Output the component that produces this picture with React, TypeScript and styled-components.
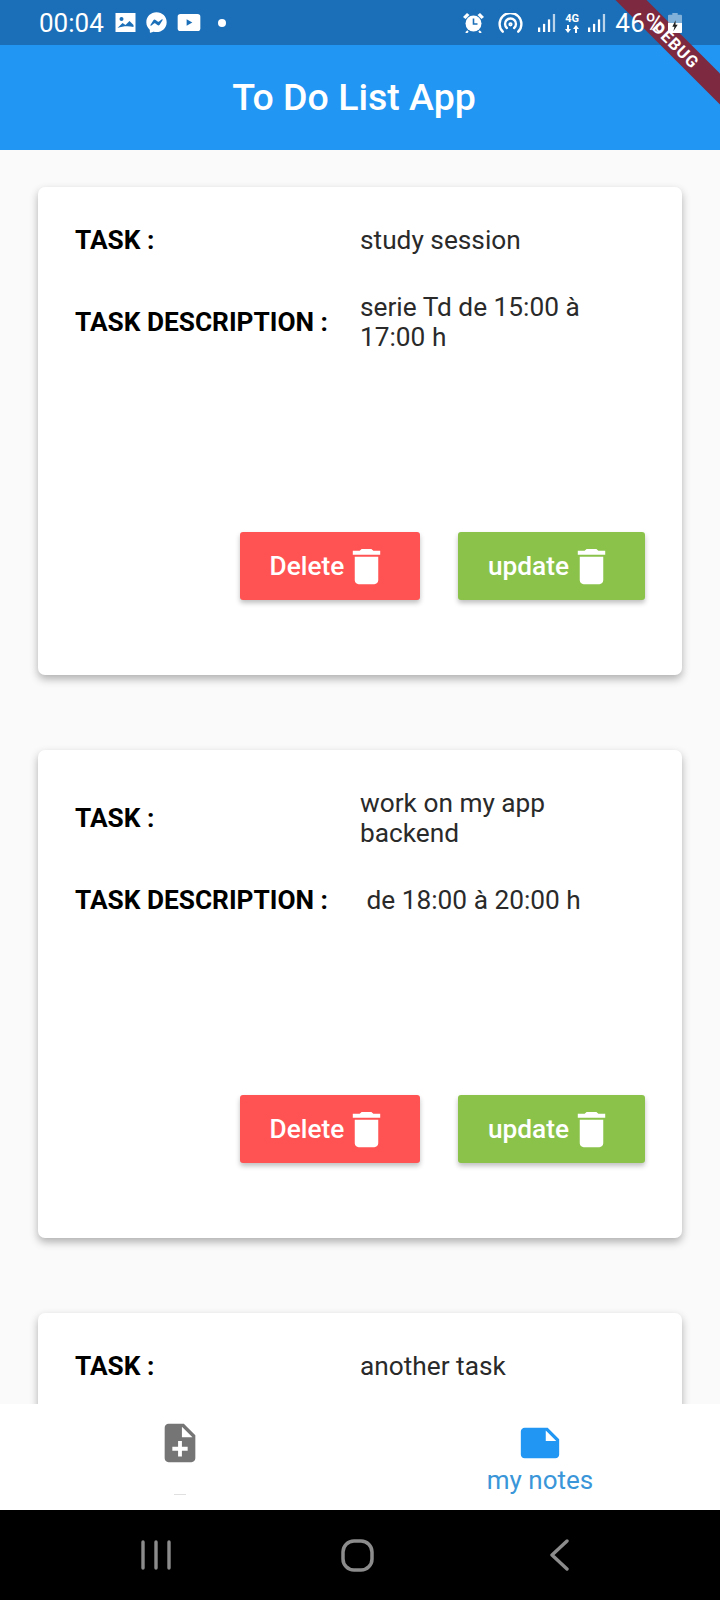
import React from 'react';
import styled, { createGlobalStyle } from 'styled-components';
import { MdDelete, MdNote, MdNoteAdd } from 'react-icons/md';
import { FaFacebookMessenger } from 'react-icons/fa';

const GlobalStyle = createGlobalStyle`
  html, body {
    margin: 0;
    padding: 0;
    background: #000;
  }
  * {
    box-sizing: border-box;
  }
`;

interface Task {
  title: string;
  description?: string;
}

// the third card runs under the bottom nav, only its title shows
const tasks: Task[] = [
  { title: 'study session', description: 'serie Td de 15:00 à 17:00 h' },
  { title: 'work on my app backend', description: ' de 18:00 à 20:00 h' },
  { title: 'another task' },
];

const App: React.FC = () => {
  return (
    <Screen>
      <GlobalStyle />
      <StatusBar>
        <StatusLeft>
          <Clock>00:04</Clock>
          <svg width="21" height="19" viewBox="0 0 20 19">
            <path fill="#fff" d="M0 0h20v19H0z" />
            <circle cx="6" cy="6" r="2" fill="#1b6fb8" />
            <path fill="#1b6fb8" d="M2 15l5-5 3 2 4-4 4 4v2c-5-1.500-11-1-16 1z" />
          </svg>
          <FaFacebookMessenger size={21} color="#fff" />
          <svg width="24" height="17" viewBox="0 0 24 18">
            <rect width="24" height="18" rx="3" fill="#fff" />
            <path fill="#1b6fb8" d="M9.500 5.500l6 3.500-6 3.500z" />
          </svg>
          <Dot />
        </StatusLeft>
        <StatusRight>
          <StatusIcon $after={14} width="21" height="21" viewBox="0 0 21 21">
            <path fill="#fff" d="M0 5l4-4 2.500 2-4 4zM21 5l-4-4-2.500 2 4 4z" />
            <circle cx="10.500" cy="11.500" r="8" fill="#fff" />
            <path stroke="#fff" strokeWidth="2" d="M5 19l-2 2M16 19l2 2" />
            <path fill="none" stroke="#1b6fb8" strokeWidth="1.600" d="M10.500 6.500v5.500h4" />
          </StatusIcon>
          <StatusIcon $after={15} width="25" height="20" viewBox="0 0 27 22" fill="none" stroke="#fff" strokeWidth="2.600" strokeLinecap="round">
            <path d="M5 20.500a12 12 0 1 1 17 0" />
            <path d="M9.500 16.500a6 6 0 1 1 8 0" />
            <circle cx="13.500" cy="12.500" r="1" />
          </StatusIcon>
          <SignalBars />
          <NetworkType>
            <span>4G</span>
            <svg width="14" height="8" viewBox="0 0 14 8" fill="#fff">
              <path d="M3 8l-3-4h2V0h2v4h2zM11 0l3 4h-2v4h-2V4H8z" />
            </svg>
          </NetworkType>
          <SignalBars />
          <Percent>46%</Percent>
          <svg width="14" height="20" viewBox="0 0 13 22" preserveAspectRatio="none">
            <path fill="#fff" fillOpacity="0.45" d="M4 0h5v2h3a1 1 0 0 1 1 1v18a1 1 0 0 1-1 1H1a1 1 0 0 1-1-1V3a1 1 0 0 1 1-1h3z" />
            <path fill="#fff" d="M0 11h13v10a1 1 0 0 1-1 1H1a1 1 0 0 1-1-1z" />
            <path fill="#222" d="M7 8l-3 7h2l-1 5 4-7H7z" />
          </svg>
        </StatusRight>
      </StatusBar>
      <AppBar>To Do List App</AppBar>
      <TaskList>
        {tasks.map((task) => (
          <TaskCard key={task.title}>
            <Row>
              <Label>TASK :</Label>
              <Value>{task.title}</Value>
            </Row>
            {task.description && (
              <>
                <Row>
                  <Label>TASK DESCRIPTION :</Label>
                  <Value>{task.description}</Value>
                </Row>
                <Actions>
                  <ActionButton $color="#ff5252" $width={180}>
                    Delete <TrashIcon size={47} />
                  </ActionButton>
                  <ActionButton $color="#8bc34a" $width={187}>
                    update <TrashIcon size={47} />
                  </ActionButton>
                </Actions>
              </>
            )}
          </TaskCard>
        ))}
      </TaskList>
      <BottomNav>
        <NavItem>
          <MdNoteAdd size={46} color="#757575" />
          <HiddenMark />
        </NavItem>
        <NavItem>
          <MdNote size={46} color="#2196f3" />
          <NavLabel>my notes</NavLabel>
        </NavItem>
      </BottomNav>
      <SystemNav>
        <svg width="30" height="30" viewBox="0 0 30 30" stroke="#8c8c8c" strokeWidth="3.400" strokeLinecap="round">
          <path d="M2 2v26M15 2v26M28 2v26" />
        </svg>
        <svg width="33" height="33" viewBox="0 0 33 33" fill="none" stroke="#8c8c8c" strokeWidth="3.500">
          <rect x="2" y="2" width="29" height="29" rx="11" />
        </svg>
        <svg width="20" height="32" viewBox="0 0 20 32" fill="none" stroke="#8c8c8c" strokeWidth="3.400" strokeLinecap="round" strokeLinejoin="round">
          <path d="M18 2L3 16l15 14" />
        </svg>
      </SystemNav>
      <DebugBanner>DEBUG</DebugBanner>
    </Screen>
  );
};

const SignalBars: React.FC = () => (
  <svg width="18" height="20" viewBox="0 0 20 20" fill="#fff">
    <rect x="0" y="15" width="2.500" height="5" />
    <rect x="5.500" y="11" width="2.500" height="9" />
    <rect x="11" y="6" width="2.500" height="14" />
    <rect x="16.500" y="0" width="2.500" height="20" fillOpacity="0.7" />
  </svg>
);

const Screen = styled.div`
  position: relative;
  width: 720px;
  height: 1600px;
  display: flex;
  flex-direction: column;
  overflow: hidden;
  background: #fafafa;
  font-family: Roboto, sans-serif;
`;

const StatusBar = styled.div`
  height: 45px;
  flex-shrink: 0;
  display: flex;
  align-items: center;
  justify-content: space-between;
  padding: 0 38px 0 39px;
  background: #1b6fb8;
  color: #fff;
`;

const StatusLeft = styled.div`
  display: flex;
  align-items: center;
  gap: 10px;
`;

/* sits over the debug ribbon, the percent and battery show through it */
const StatusRight = styled.div`
  position: relative;
  z-index: 2;
  display: flex;
  align-items: center;
  gap: 9px;
`;

const StatusIcon = styled.svg<{ $after: number }>`
  margin-right: ${(p) => p.$after - 9}px;
`;

const Clock = styled.span`
  font-size: 26px;
  margin-right: 1px;
`;

const Dot = styled.span`
  width: 8px;
  height: 8px;
  margin-left: 7px;
  border-radius: 50%;
  background: #fff;
`;

const NetworkType = styled.div`
  display: flex;
  flex-direction: column;
  align-items: center;
  font-size: 11px;
  font-weight: 700;
  line-height: 12px;
`;

const Percent = styled.span`
  font-size: 26px;
  letter-spacing: 0.5px;
  margin-right: -6px;
`;

const AppBar = styled.header`
  height: 105px;
  flex-shrink: 0;
  display: flex;
  align-items: center;
  justify-content: center;
  padding: 0 12px 2px 0;
  background: #2196f3;
  color: #fff;
  font-size: 37.500px;
  font-weight: 500;
`;

const TaskList = styled.main`
  flex: 1;
  min-height: 0;
  overflow: hidden;
  display: flex;
  flex-direction: column;
  gap: 75px;
  padding: 37px 38px 0;
`;

const TaskCard = styled.section`
  height: 488px;
  flex-shrink: 0;
  display: flex;
  flex-direction: column;
  gap: 37px;
  padding: 38px 37px 0;
  border-radius: 7px;
  background: #fff;
  box-shadow: 0 4px 8px rgba(0, 0, 0, 0.3);
`;

const Row = styled.div`
  display: grid;
  grid-template-columns: 285px 240px;
  align-items: center;
`;

const Label = styled.span`
  color: #000;
  font-size: 26.250px;
  font-weight: 700;
  line-height: 30px;
`;

const Value = styled.span`
  color: #2a2a2a;
  font-size: 26.250px;
  line-height: 30px;
  white-space: pre-wrap;
`;

const Actions = styled.div`
  display: flex;
  justify-content: flex-end;
  gap: 38px;
  margin-top: 143px;
`;

const ActionButton = styled.button<{ $color: string; $width: number }>`
  width: ${(p) => p.$width}px;
  height: 68px;
  display: flex;
  align-items: center;
  justify-content: center;
  padding: 0;
  border: none;
  border-radius: 3px;
  background: ${(p) => p.$color};
  box-shadow: 0 3px 5px rgba(0, 0, 0, 0.25);
  color: #fff;
  font-family: Roboto, sans-serif;
  font-size: 26.250px;
  font-weight: 500;
`;

const TrashIcon = styled(MdDelete)`
  margin-left: -1px;
`;

const BottomNav = styled.nav`
  height: 106px;
  flex-shrink: 0;
  display: grid;
  grid-template-columns: 1fr 1fr;
  background: #fff;
`;

const NavItem = styled.div`
  display: flex;
  flex-direction: column;
  align-items: center;
  padding-top: 16px;
  line-height: 0;
`;

const NavLabel = styled.span`
  color: #3a96d8;
  font-size: 26px;
  line-height: 28px;
`;

const HiddenMark = styled.span`
  width: 12px;
  height: 1px;
  margin-top: 28px;
  background: #e0e0e0;
`;

const SystemNav = styled.div`
  height: 90px;
  flex-shrink: 0;
  display: grid;
  grid-template-columns: 1fr 1fr 1fr;
  justify-items: center;
  align-items: center;
  padding: 0 60px 0 55px;
  background: #000;
`;

const DebugBanner = styled.div`
  position: absolute;
  z-index: 1;
  top: 34px;
  right: -31px;
  width: 150px;
  height: 22px;
  display: flex;
  align-items: center;
  justify-content: center;
  transform: rotate(45deg);
  background: #7d2a40;
  color: #fff;
  font-size: 16.500px;
  font-weight: 700;
  letter-spacing: 1px;
`;

export default App;
